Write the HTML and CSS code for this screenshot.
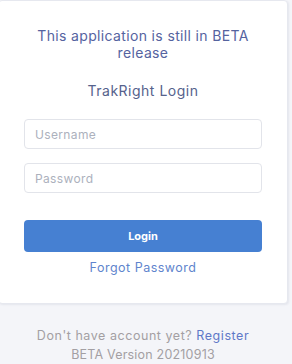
FILE: index.html
```html
<!DOCTYPE html>
<html>
<head>
<meta charset="utf-8">
<link rel="stylesheet" href="styles.css">
</head>
<body>
<div class="card">
  <h2 class="notice">This application is still in BETA release</h2>
  <h3 class="title">TrakRight Login</h3>
  <form class="form">
    <input class="field" type="text" placeholder="Username">
    <input class="field" type="password" placeholder="Password">
    <button class="btn" type="button">Login</button>
  </form>
  <a class="forgot" href="#">Forgot Password</a>
</div>
<div class="footer">
  <p class="line">Don't have account yet? <a class="reg" href="#">Register</a></p>
  <p class="line version">BETA Version 20210913</p>
</div>
</body>
</html>
```
FILE: styles.css
```css
html, body {
  margin: 0;
  padding: 0;
}
body {
  background: #f4f5f9;
  font-family: Inter, "Noto Sans", sans-serif;
  width: 292px;
  height: 364px;
  overflow: hidden;
}
.card {
  box-sizing: border-box;
  width: 290px;
  height: 304px;
  margin-left: -2px;
  background: #fff;
  border: 1px solid #e6e8ef;
  border-radius: 4px;
  box-shadow: 1px 1px 2px rgba(56, 65, 100, 0.08);
  padding: 26px 25px 0;
  display: flex;
  flex-direction: column;
  align-items: stretch;
}
.notice {
  margin: 0;
  font-size: 14px;
  line-height: 17px;
  font-weight: 400;
  letter-spacing: 0.35px;
  color: #55639f;
  text-align: center;
  padding: 0 6px;
}
.title {
  margin: 21px 0 0;
  font-size: 14px;
  line-height: 17px;
  font-weight: 400;
  letter-spacing: 0.5px;
  color: #56628c;
  text-align: center;
}
.form {
  margin-top: 20px;
  display: flex;
  flex-direction: column;
}
.field {
  box-sizing: border-box;
  height: 30px;
  border: 1px solid #e2e4ea;
  border-radius: 4px;
  padding: 0 10px;
  font-family: inherit;
  font-size: 12px;
  letter-spacing: 0.35px;
  color: #495057;
  margin-bottom: 14px;
  outline: none;
}
.field::placeholder {
  color: #acb1bd;
}
.btn {
  margin-top: 13px;
  height: 32px;
  border: none;
  border-radius: 4px;
  background: #4680d2;
  color: #fff;
  font-family: inherit;
  font-size: 11px;
  font-weight: 700;
}
.forgot {
  margin-top: 8px;
  text-align: center;
  font-size: 12.5px;
  line-height: 16px;
  letter-spacing: 0.5px;
  color: #6084cd;
  text-decoration: none;
}
.footer {
  width: 290px;
  margin-left: -2px;
  padding-top: 22px;
  text-align: center;
}
.line {
  margin: 0;
  font-size: 12.5px;
  line-height: 19px;
  letter-spacing: 0.55px;
  color: #a39fa3;
}
.version {
  letter-spacing: 0.2px;
}
.reg {
  color: #5f78c8;
  text-decoration: none;
}
```
